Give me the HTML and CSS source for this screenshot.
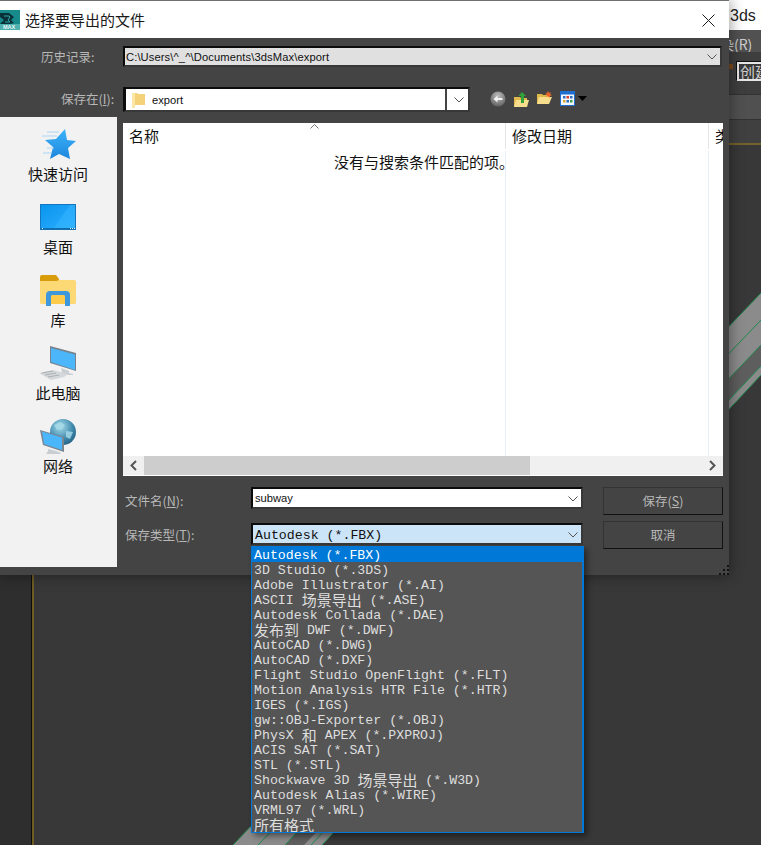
FILE: index.html
```html
<!DOCTYPE html>
<html lang="zh-CN">
<head>
<meta charset="utf-8">
<title>选择要导出的文件</title>
<link rel="stylesheet" href="styles.css">
</head>
<body>
<div class="app">
  <div class="app-title">3ds Max</div>
  <div class="app-menu">染(R)</div>
  <div class="app-tools"><i class="app-dot"></i><div class="app-set">创建</div></div>
  <div class="app-ribbon"></div>
  <div class="app-sub"></div>
  <div class="viewport">
    <div class="vp-left"></div>
    <div class="vp-main"></div>
    <svg class="strip" viewBox="0 0 761 845" width="761" height="845">
      <polygon points="233,845 761,293 761,375 322,845" fill="#8b8b8b"/>
      <polygon points="285,845 761,345 761,366 304,845" fill="#5e5e5e"/>
      <polygon points="311,845 761,366 761,375 322,845" fill="#8b8b8b"/>
      <g stroke="#1d8a4e" stroke-width="1" fill="none">
        <line x1="233" y1="845" x2="761" y2="293"/>
        <line x1="258" y1="845" x2="761" y2="320"/>
        <line x1="285" y1="845" x2="761" y2="345"/>
        <line x1="311" y1="845" x2="761" y2="366"/>
        <line x1="322" y1="845" x2="761" y2="375"/>
      </g>
    </svg>
  </div>
</div>

<section class="dialog">
  <header class="titlebar">
    <svg class="app-icon" viewBox="0 0 20 20" width="20" height="20">
      <rect width="20" height="20" fill="#178a8c"/>
      <rect y="14" width="20" height="6" fill="#4fb0b0"/>
      <path d="M0 3h9l5 4-3 3 3 3-4 1H0l4-4-4-3z" fill="#0b3138"/>
      <path d="M4 6h5l1 1-2 3 2 2H5" fill="none" stroke="#2ca6a8" stroke-width="1"/>
      <text x="3" y="19.4" class="app-icon-text">MAX</text>
    </svg>
    <h1 class="title">选择要导出的文件</h1>
    <svg class="close" viewBox="0 0 13 13" width="13" height="13"><path d="M.5.5l12 12M12.5.5l-12 12" stroke="#1a1a1a" fill="none"/></svg>
  </header>

  <div class="body">
    <div class="row row-history">
      <label class="label label-history">历史记录:</label>
      <div class="combo combo-history">
        <span class="path path-long">C:\Users\^_^\Documents\3dsMax\export</span>
        <svg class="chev" viewBox="0 0 10 6" width="10" height="6"><path d="M.5.5L5 5 9.5.5" fill="none" stroke="#555"/></svg>
      </div>
    </div>

    <div class="row row-save">
      <label class="label label-save">保存在(<u>I</u>):</label>
      <div class="combo-save">
        <div class="save-value">
          <svg class="folder" viewBox="0 0 13 16" width="13" height="16">
            <path d="M0 1h5l1 1h7v11H3l-3 3z" fill="#f3d27a"/>
            <path d="M0 1h3v15H0z" fill="#fbe7a8"/>
          </svg>
          <span class="save-text">export</span>
        </div>
        <div class="save-btn"><svg viewBox="0 0 10 6" width="10" height="6"><path d="M.5.5L5 5 9.5.5" fill="none" stroke="#555"/></svg></div>
      </div>
      <div class="tools">
        <svg viewBox="0 0 16 16" width="16" height="16">
          <defs><radialGradient id="backBall" cx=".5" cy=".3" r=".8"><stop offset="0" stop-color="#bdbdbd"/><stop offset="1" stop-color="#555"/></radialGradient></defs>
          <circle cx="8" cy="8" r="7.5" fill="url(#backBall)"/>
          <path d="M3.5 8L7.5 4.5V7h5v2h-5v2.500z" fill="#f2f2f2"/>
        </svg>
        <svg class="tool-up" viewBox="0 0 15 16" width="15" height="16">
          <path d="M0 6h6l1 1h6v9H0z" fill="#e0b84c"/>
          <path d="M2 9h13l-2 7H0z" fill="#f7de8c"/>
          <path d="M8 1l4 4h-2v7H7V5H4.500z" fill="#2fa33a"/>
        </svg>
        <svg class="tool-new" viewBox="0 0 15 14" width="15" height="14">
          <path d="M0 3h5l1 1h6v9H0z" fill="#e0b84c"/>
          <path d="M2 6h13l-3 7H0z" fill="#f7de8c"/>
          <path d="M11 0l1 2 2-1-1 2 2 1-2 1 0 2-2-2-2 1 1-2-2-1 2-1z" fill="#e8642a"/>
        </svg>
        <svg class="tool-view" viewBox="0 0 15 15" width="15" height="15">
          <rect x=".5" y=".5" width="14" height="14" fill="#f4f8fc" stroke="#1f6fd0"/>
          <rect x="1" y="1" width="13" height="2.500" fill="#1f6fd0"/>
          <rect x="3" y="5" width="2.500" height="2.500" fill="#2a6fc0"/><rect x="6.500" y="5" width="2.500" height="2.500" fill="#d9402a"/><rect x="10" y="5" width="2.500" height="2.500" fill="#2a6fc0"/>
          <rect x="3" y="9" width="2.500" height="2.500" fill="#e2a52b"/><rect x="6.500" y="9" width="2.500" height="2.500" fill="#2a6fc0"/><rect x="10" y="9" width="2.500" height="2.500" fill="#3da04a"/>
        </svg>
        <svg class="tool-caret" viewBox="0 0 9 5" width="9" height="5"><path d="M0 0h9L4.500 5z" fill="#000"/></svg>
      </div>
    </div>

    <div class="main">
      <nav class="places">
        <div class="place">
          <div class="place-icon">
            <svg viewBox="0 0 36 32" width="36" height="32">
              <defs><linearGradient id="star" x1="0" y1="0" x2="0" y2="1"><stop offset="0" stop-color="#3cb4fa"/><stop offset="1" stop-color="#1d86dd"/></linearGradient></defs>
              <path d="M25 1l2 11 9 1-8 7 2 11-11-5-9 5 3-12-8-7 11-1z" fill="url(#star)"/>
              <path d="M7 4h12M2 8h15M7 20h7M3 25h8" stroke="#a9d6f5" stroke-width="1"/>
            </svg>
          </div>
          <span class="place-label">快速访问</span>
        </div>
        <div class="place">
          <div class="place-icon">
            <svg viewBox="0 0 36 26" width="36" height="26">
              <defs><linearGradient id="desk" x1="0" y1="0" x2="1" y2="1"><stop offset="0" stop-color="#0a94ee"/><stop offset="1" stop-color="#2cb0ff"/></linearGradient></defs>
              <rect x=".5" y=".5" width="35" height="25" fill="url(#desk)" stroke="#1477bd"/>
              <path d="M14 24L30 1h5v23z" fill="#3cb8ff" opacity=".45"/>
              <rect x="1" y="24" width="34" height="1.500" fill="#0f6dab"/>
              <path d="M2 24.500h1M30 24.500h1M32 24.500h1M34 24.500h1" stroke="#fff"/>
            </svg>
          </div>
          <span class="place-label">桌面</span>
        </div>
        <div class="place">
          <div class="place-icon">
            <svg viewBox="0 0 36 31" width="36" height="31">
              <path d="M0 2q0-2 2-2h14l3 4v3H0z" fill="#d99c0b"/>
              <path d="M0 6h17l2-1h15q2 0 2 2v21q0 1-2 1H2q-2 0-2-1z" fill="#fdd976"/>
              <path d="M6 31V20q0-4 4-4h16q4 0 4 4v11h-5v-9q0-2-2-2H13q-2 0-2 2v9z" fill="#3f97dc"/>
              <path d="M11 29v-7q0-2 2-2h10q2 0 2 2v7z" fill="#ffcb4a"/>
            </svg>
          </div>
          <span class="place-label">库</span>
        </div>
        <div class="place">
          <div class="place-icon">
            <svg viewBox="0 0 38 36" width="38" height="36">
              <path d="M11 1l26 7v18L11 18z" fill="#77828c"/>
              <path d="M12 3l24 6.500V25L12 17z" fill="#4cb6fb"/>
              <path d="M22 23l8 3v2l4 1v1H21l-2-2 4-1z" fill="#c8ced2"/>
              <path d="M0 28l14-3 15 4-4 3-13 3z" fill="#d4d8da"/>
              <path d="M3 28l11-2M6 30l11-2M9 32l11-2" stroke="#aab0b4"/>
            </svg>
          </div>
          <span class="place-label">此电脑</span>
        </div>
        <div class="place">
          <div class="place-icon">
            <svg viewBox="0 0 36 35" width="36" height="35">
              <defs><radialGradient id="globe" cx=".4" cy=".3" r=".8"><stop offset="0" stop-color="#a7dcec"/><stop offset=".6" stop-color="#3f89ad"/><stop offset="1" stop-color="#1f5a7c"/></radialGradient></defs>
              <circle cx="23" cy="13" r="13" fill="url(#globe)"/>
              <path d="M14 6l6-3 5 3-3 4-5 1zM26 12l7 1-3 7-4-2z" fill="#a9dbe8" opacity=".8"/>
              <path d="M0 11l24 7v15L3 26z" fill="#7a858e"/>
              <path d="M2 12.500l20 6V31L4 25z" fill="#4cb6fb"/>
              <path d="M8 30l8 2 5 2-1 1H6l2-3z" fill="#c8ced2"/>
            </svg>
          </div>
          <span class="place-label">网络</span>
        </div>
      </nav>

      <div class="content">
        <div class="list">
          <div class="list-head">
            <span class="col col-name">名称</span>
            <svg class="sort" viewBox="0 0 9 5" width="9" height="5"><path d="M.5 4.500L4.500.5l4 4" fill="none" stroke="#777"/></svg>
            <span class="col col-date">修改日期</span>
            <span class="col col-type">类型</span>
          </div>
          <p class="empty">没有与搜索条件匹配的项。</p>
          <div class="scrollbar">
            <div class="sb-btn"><svg viewBox="0 0 7 11" width="7" height="11"><path d="M6 1L1.500 5.500 6 10" fill="none" stroke="#555" stroke-width="2"/></svg></div>
            <div class="sb-thumb"></div>
            <div class="sb-btn sb-right"><svg viewBox="0 0 7 11" width="7" height="11"><path d="M1 1l4.500 4.500L1 10" fill="none" stroke="#555" stroke-width="2"/></svg></div>
          </div>
        </div>

        <div class="form">
          <label class="label form-label">文件名(<u>N</u>):</label>
          <div class="combo combo-name">
            <span class="path">subway</span>
            <svg class="chev" viewBox="0 0 10 6" width="10" height="6"><path d="M.5.5L5 5 9.5.5" fill="none" stroke="#555"/></svg>
          </div>
          <button class="btn" type="button">保存(<u>S</u>)</button>

          <label class="label form-label">保存类型(<u>T</u>):</label>
          <div class="combo combo-type">
            <span class="mono">Autodesk (*.FBX)</span>
            <svg class="chev" viewBox="0 0 10 6" width="10" height="6"><path d="M.5.5L5 5 9.5.5" fill="none" stroke="#555"/></svg>
            <ul class="dropdown">
              <li class="opt opt-on">Autodesk (*.FBX)</li>
              <li class="opt">3D Studio (*.3DS)</li>
              <li class="opt">Adobe Illustrator (*.AI)</li>
              <li class="opt">ASCII <span class="cjk">场景导出</span> (*.ASE)</li>
              <li class="opt">Autodesk Collada (*.DAE)</li>
              <li class="opt"><span class="cjk">发布到</span> DWF (*.DWF)</li>
              <li class="opt">AutoCAD (*.DWG)</li>
              <li class="opt">AutoCAD (*.DXF)</li>
              <li class="opt">Flight Studio OpenFlight (*.FLT)</li>
              <li class="opt">Motion Analysis HTR File (*.HTR)</li>
              <li class="opt">IGES (*.IGS)</li>
              <li class="opt">gw::OBJ-Exporter (*.OBJ)</li>
              <li class="opt">PhysX <span class="cjk">和</span> APEX (*.PXPROJ)</li>
              <li class="opt">ACIS SAT (*.SAT)</li>
              <li class="opt">STL (*.STL)</li>
              <li class="opt">Shockwave 3D <span class="cjk">场景导出</span> (*.W3D)</li>
              <li class="opt">Autodesk Alias (*.WIRE)</li>
              <li class="opt">VRML97 (*.WRL)</li>
              <li class="opt"><span class="cjk">所有格式</span></li>
            </ul>
          </div>
          <button class="btn" type="button">取消</button>
        </div>
      </div>
    </div>

    <svg class="grip" viewBox="0 0 10 10" width="10" height="10">
      <path d="M8 0h2v2H8zM4 4h2v2H4zM8 4h2v2H8zM0 8h2v2H0zM4 8h2v2H4zM8 8h2v2H8z" fill="#111"/>
    </svg>
  </div>
</section>
</body>
</html>
```

FILE: styles.css
```css
* { box-sizing: border-box; }

html, body {
  margin: 0;
  padding: 0;
  height: 845px;
  overflow: hidden;
  background: #383838;
  font-family: "Noto Sans CJK SC", "Noto Sans", sans-serif;
}

/* Application behind the dialog */
.app {
  position: absolute;
  inset: 0;
  display: flex;
  flex-direction: column;
  overflow: hidden;
}
.app-title {
  height: 30px;
  flex: none;
  background: #fff;
  padding-left: 730px;
  font: 16px/32px "Liberation Sans", sans-serif;
  color: #222;
  white-space: nowrap;
}
.app-menu {
  height: 22px;
  flex: none;
  background: #515151;
  padding-left: 720px;
  font-size: 14px;
  line-height: 28px;
  color: #cfcfcf;
  white-space: nowrap;
}
.app-tools {
  height: 42px;
  flex: none;
  background: #3e3e3e;
  padding: 10px 0 0 737px;
  display: flex;
}
.app-dot {
  position: absolute;
  left: 729px;
  top: 64px;
  width: 4px;
  height: 5px;
  background: #7a4a1c;
}
.app-set {
  width: 60px;
  height: 19px;
  flex: none;
  background: #3a3a3a;
  border: 2px solid #e6e6e6;
  font-size: 15px;
  line-height: 15px;
  color: #cfcfcf;
  padding-left: 1px;
  box-shadow: -1px -1px 0 #111;
  overflow: hidden;
  white-space: nowrap;
}
.app-ribbon {
  height: 25px;
  flex: none;
  background: #505050;
  border-top: 1px solid #333;
}
.app-sub {
  height: 26px;
  flex: none;
  background: #404040;
  border-top: 1px solid #333;
  border-bottom: 2px solid #75612a;
}
.viewport {
  flex: 1;
  display: flex;
}
.vp-left {
  width: 32px;
  background: #2e2e2e;
  border-right: 1px solid #0c0c0c;
}
.vp-main {
  flex: 1;
  background: #383838;
  border-left: 2px solid #6f5c23;
}
.strip {
  position: absolute;
  left: 0;
  top: 0;
}

/* Dialog window */
.dialog {
  position: absolute;
  left: 0;
  top: 0;
  width: 729px;
  height: 575px;
  border-top: 1px solid #707070;
  background: #444;
  box-shadow: 0 0 14px rgba(0, 0, 0, .45);
  display: flex;
  flex-direction: column;
}
.titlebar {
  height: 37px;
  background: #fff;
  display: flex;
  align-items: center;
  flex: none;
}
.app-icon { margin-top: 1px; flex: none; }
.app-icon-text {
  font: bold 5.500px "Liberation Sans", sans-serif;
  fill: #e8f6f6;
}
.title {
  margin: 0 0 0 5px;
  font-size: 15px;
  font-weight: 400;
  color: #1a1a1a;
  line-height: 20px;
  flex: 1;
}
.close { margin: 1px 14px 0 0; flex: none; }

.body {
  position: relative;
  flex: 1;
  display: flex;
  flex-direction: column;
}
.row { display: flex; flex: none; }
.row-history { height: 21px; margin-top: 8px; }
.row-save { height: 25px; margin-top: 20px; }

.label {
  font-size: 12.500px;
  color: #b8b8b8;
  white-space: nowrap;
  flex: none;
}
.label-history { width: 123px; padding-left: 41px; line-height: 22px; }
.label-save { width: 123px; padding-left: 61px; line-height: 24px; }

.combo {
  position: relative;
  display: flex;
  align-items: center;
  border-style: solid;
  border-color: #0c0c0c #383838 #383838 #0c0c0c;
  border-width: 2px;
}
.combo-history {
  width: 599px;
  background: #e0e0e0;
  padding-left: 1px;
}
.path {
  font: 11.200px/16px "Liberation Sans", sans-serif;
  color: #111;
  white-space: nowrap;
}
.path-long { letter-spacing: .1px; }
.chev { position: absolute; right: 3px; top: 6px; }

.combo-save {
  width: 347px;
  display: flex;
  background: #fff;
  border-style: solid;
  border-color: #0c0c0c #383838 #383838 #0c0c0c;
  border-width: 2px 2px 2px 3px;
  gap: 2px;
}
.save-value {
  flex: 1;
  background: #fff;
  display: flex;
  align-items: center;
  padding-left: 6px;
  border-right: 2px solid #444;
}
.folder { flex: none; }
.save-text {
  margin-left: 7px;
  font: 11.200px/16px "Liberation Sans", sans-serif;
  color: #111;
}
.save-btn {
  width: 19px;
  display: flex;
  align-items: center;
  justify-content: center;
}
.tools {
  display: flex;
  align-items: flex-start;
  margin-left: 20px;
  padding-top: 4px;
  gap: 8px;
}
.tool-caret { margin: 5px 0 0 -5px; }

.main {
  flex: 1;
  display: flex;
  margin-top: 5px;
  min-height: 0;
}
.places {
  width: 117px;
  height: 450px;
  background: #f2f2f2;
  padding: 7px 1px 0 0;
  flex: none;
}
.place {
  height: 73px;
  display: flex;
  flex-direction: column;
  align-items: center;
}
.place-icon {
  height: 40px;
  display: flex;
  align-items: center;
  justify-content: center;
  flex: none;
}
.place-label {
  font-size: 15px;
  line-height: 20px;
  color: #111;
}

.content {
  width: 600px;
  margin-left: 6px;
  padding-top: 6px;
  flex: none;
}
.list {
  position: relative;
  height: 353px;
  background: #fff;
  overflow: hidden;
  display: flex;
  flex-direction: column;
}
.list-head {
  position: relative;
  height: 26px;
  flex: none;
  display: grid;
  grid-template-columns: 382px 203px 15px;
  font-size: 15px;
  line-height: 26px;
  color: #111;
}
.col { padding-left: 6px; white-space: nowrap; overflow: hidden; }
.col-date { border-left: 1px solid #e5e5e5; }
.col-type { border-left: 1px solid #e5e5e5; }
.sort { position: absolute; left: 187px; top: 1px; }
.empty {
  margin: 2px 0 0 211px;
  font-size: 15px;
  line-height: 22px;
  color: #111;
  white-space: nowrap;
  flex: 1;
  min-height: 0;
  background:
    linear-gradient(#e5effb, #e5effb) 171px 0 / 1px 100% no-repeat,
    linear-gradient(#e5effb, #e5effb) 374px 0 / 1px 100% no-repeat;
}
.scrollbar {
  height: 20px;
  flex: none;
  display: flex;
  background: #f0f0f0;
  border-bottom: 1px solid #fff;
}
.sb-btn {
  width: 21px;
  display: flex;
  align-items: center;
  justify-content: center;
  flex: none;
}
.sb-thumb { width: 386px; background: #cdcdcd; }
.sb-right { margin-left: auto; }

.form {
  margin-top: 11px;
  display: grid;
  grid-template-columns: 128px 352px 120px;
  grid-template-rows: 28px 28px;
  row-gap: 6px;
}
.form-label { padding-left: 2px; line-height: 28px; }
.combo-name, .combo-type {
  height: 22px;
  width: 332px;
  padding-left: 2px;
}
.combo-name .chev, .combo-type .chev { top: 7px; }
.combo-name { background: #fff; }
.combo-type { background: #cce4f7; margin-top: 2px; }
.mono {
  font: 13.250px/15px "Liberation Mono", "Noto Sans CJK SC", monospace;
  color: #111;
  white-space: pre;
  margin-top: 2px;
}
.btn {
  width: 120px;
  height: 28px;
  padding: 0;
  background: #444;
  border: 1px solid;
  border-color: #333 #111 #111 #333;
  color: #b8b8b8;
  font: 12.500px/24px "Noto Sans CJK SC", sans-serif;
}

.dropdown {
  position: absolute;
  left: -2px;
  top: 21px;
  width: 333px;
  height: 287px;
  margin: 0;
  padding: 0;
  list-style: none;
  background: #555;
  border: 1px solid #0078d7;
  border-right-width: 2px;
  box-shadow: 3px 3px 6px rgba(0, 0, 0, .45);
  z-index: 2;
  overflow: hidden;
}
.opt {
  height: 15px;
  padding: 1px 0 0 2px;
  display: flex;
  align-items: flex-start;
  font: 13.250px/15px "Liberation Mono", "Noto Sans CJK SC", monospace;
  color: #dedede;
  white-space: pre;
}
.opt-on {
  background: #0078d7;
  color: #fff;
}
.cjk {
  font-family: "Noto Sans CJK SC", sans-serif;
  font-size: 15px;
  line-height: 15px;
  margin-top: -1px;
}

.grip {
  position: absolute;
  right: 0;
  bottom: 0;
}
```
